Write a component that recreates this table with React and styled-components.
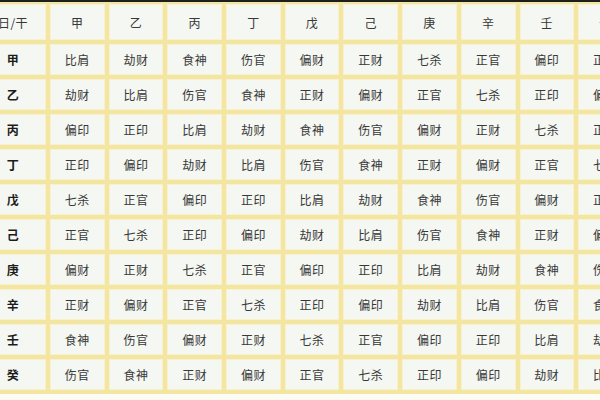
import React from "react";
import styled, { createGlobalStyle } from "styled-components";

const Global = createGlobalStyle`
  html, body { margin: 0; padding: 0; background: #fcfcf4; }
  body { width: 600px; height: 400px; overflow: hidden; }
`;

const Frame = styled.div`
  width: 600px;
  height: 400px;
  overflow: hidden;
  border-top: 2px solid #1e1e1e;
  box-sizing: border-box;
  background: #fcfcf4;
`;

const Grid = styled.div`
  display: grid;
  grid-template-columns: 66px repeat(10, 54.7px);
  grid-template-rows: 36px repeat(10, 31px);
  gap: 4px;
  padding: 2px 4px 4px 4px;
  margin-left: -24px;
  width: max-content;
  background: #f2e6a2;
`;

const Cell = styled.div`
  display: flex;
  align-items: center;
  justify-content: center;
  background: #f4f7f2;
  box-shadow: inset 0 0 0 1px #f8f1cc;
  font-family: "Noto Sans CJK SC", "Noto Sans", sans-serif;
  font-size: 12px;
  color: ${(p) => (p.$label ? "#1c1c1c" : "#383838")};
  font-weight: ${(p) => (p.$label ? 700 : 400)};
  letter-spacing: 0.5px;
`;

const stems = ["甲", "乙", "丙", "丁", "戊", "己", "庚", "辛", "壬", "癸"];
const gods = [
  ["比肩", "劫财", "食神", "伤官", "偏财", "正财", "七杀", "正官", "偏印", "正印"],
  ["劫财", "比肩", "伤官", "食神", "正财", "偏财", "正官", "七杀", "正印", "偏印"],
  ["偏印", "正印", "比肩", "劫财", "食神", "伤官", "偏财", "正财", "七杀", "正官"],
  ["正印", "偏印", "劫财", "比肩", "伤官", "食神", "正财", "偏财", "正官", "七杀"],
  ["七杀", "正官", "偏印", "正印", "比肩", "劫财", "食神", "伤官", "偏财", "正财"],
  ["正官", "七杀", "正印", "偏印", "劫财", "比肩", "伤官", "食神", "正财", "偏财"],
  ["偏财", "正财", "七杀", "正官", "偏印", "正印", "比肩", "劫财", "食神", "伤官"],
  ["正财", "偏财", "正官", "七杀", "正印", "偏印", "劫财", "比肩", "伤官", "食神"],
  ["食神", "伤官", "偏财", "正财", "七杀", "正官", "偏印", "正印", "比肩", "劫财"],
  ["伤官", "食神", "正财", "偏财", "正官", "七杀", "正印", "偏印", "劫财", "比肩"],
];

export default function App() {
  return (
    <>
      <Global />
      <Frame>
        <Grid>
          <Cell>日/干</Cell>
          {stems.map((s) => (
            <Cell key={"h" + s}>{s}</Cell>
          ))}
          {stems.map((s, i) => (
            <React.Fragment key={s}>
              <Cell $label>{s}</Cell>
              {gods[i].map((g, j) => (
                <Cell key={j}>{g}</Cell>
              ))}
            </React.Fragment>
          ))}
        </Grid>
      </Frame>
    </>
  );
}
